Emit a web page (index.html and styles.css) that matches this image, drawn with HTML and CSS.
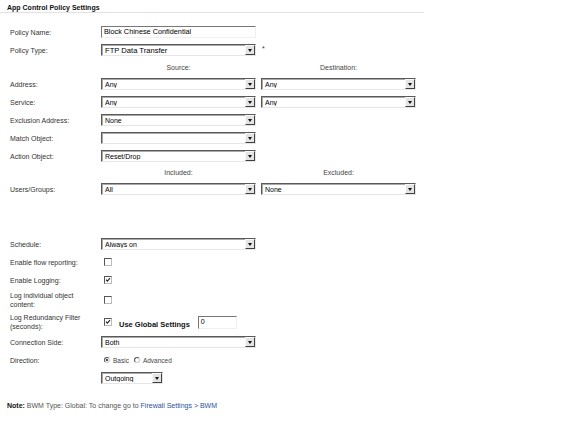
FILE: index.html
```html
<!DOCTYPE html>
<html>
<head>
<meta charset="utf-8">
<link rel="stylesheet" href="styles.css">
</head>
<body>
<div class="title">App Control Policy Settings</div>
<div class="form">
  <div class="row r-name">
    <div class="label">Policy Name:</div>
    <div class="textbox name">Block Chinese Confidential</div>
  </div>
  <div class="row">
    <div class="label">Policy Type:</div>
    <div class="select big"><span>FTP Data Transfer</span><i class="btn"></i></div>
    <span class="req">*</span>
  </div>
  <div class="row head h-src">
    <div class="label"></div>
    <div class="colhead">Source:</div>
    <div class="colhead">Destination:</div>
  </div>
  <div class="row">
    <div class="label">Address:</div>
    <div class="select"><span>Any</span><i class="btn"></i></div>
    <div class="select"><span>Any</span><i class="btn"></i></div>
  </div>
  <div class="row">
    <div class="label">Service:</div>
    <div class="select"><span>Any</span><i class="btn"></i></div>
    <div class="select"><span>Any</span><i class="btn"></i></div>
  </div>
  <div class="row">
    <div class="label">Exclusion Address:</div>
    <div class="select"><span>None</span><i class="btn"></i></div>
  </div>
  <div class="row">
    <div class="label">Match Object:</div>
    <div class="select"><span></span><i class="btn"></i></div>
  </div>
  <div class="row">
    <div class="label">Action Object:</div>
    <div class="select"><span>Reset/Drop</span><i class="btn"></i></div>
  </div>
  <div class="row head h-inc">
    <div class="label"></div>
    <div class="colhead">Included:</div>
    <div class="colhead">Excluded:</div>
  </div>
  <div class="row">
    <div class="label">Users/Groups:</div>
    <div class="select"><span>All</span><i class="btn"></i></div>
    <div class="select"><span>None</span><i class="btn"></i></div>
  </div>
  <div class="spacer"></div>
  <div class="row">
    <div class="label">Schedule:</div>
    <div class="select"><span>Always on</span><i class="btn"></i></div>
  </div>
  <div class="row">
    <div class="label">Enable flow reporting:</div>
    <span class="cb"></span>
  </div>
  <div class="row">
    <div class="label">Enable Logging:</div>
    <span class="cb checked"><svg viewBox="0 0 6 6" width="6" height="6"><path d="M1 2.6 L2.4 4.2 L5 1.2" fill="none" stroke="#222" stroke-width="1.1"/></svg></span>
  </div>
  <div class="row tall">
    <div class="label">Log individual object<br>content:</div>
    <span class="cb"></span>
  </div>
  <div class="row tall">
    <div class="label">Log Redundancy Filter<br>(seconds):</div>
    <span class="cb checked"><svg viewBox="0 0 6 6" width="6" height="6"><path d="M1 2.6 L2.4 4.2 L5 1.2" fill="none" stroke="#222" stroke-width="1.1"/></svg></span>
    <span class="global">Use Global Settings</span>
    <div class="textbox small">0</div>
  </div>
  <div class="row">
    <div class="label">Connection Side:</div>
    <div class="select"><span>Both</span><i class="btn"></i></div>
  </div>
  <div class="row">
    <div class="label">Direction:</div>
    <span class="radio on"></span><span class="rlabel">Basic</span>
    <span class="radio"></span><span class="rlabel">Advanced</span>
  </div>
  <div class="row">
    <div class="label"></div>
    <div class="select short"><span>Outgoing</span><i class="btn"></i></div>
  </div>
</div>
<p class="note"><b>Note:</b> BWM Type: Global: To change go to <a class="link">Firewall Settings &gt; BWM</a></p>
</body>
</html>
```
FILE: styles.css
```css
* { box-sizing: border-box; }
body {
  margin: 0;
  background: #fff;
  font-family: "Liberation Sans", Arial, sans-serif;
  font-size: 7px;
  color: #333;
}
.title {
  width: 424px;
  height: 13px;
  padding: 4px 0 0 7px;
  line-height: 8px;
  font-weight: bold;
  color: #111;
  border-bottom: 1px solid #e2e2e2;
}
.form {
  padding-top: 10px;
}
.row {
  display: flex;
  align-items: center;
  height: 18px;
}
.row.head { height: 16px; color: #444; }
.row.h-inc { height: 15px; }
.row.tall { height: 22px; }
.label {
  flex: none;
  width: 101px;
  padding-left: 10px;
  line-height: 9px;
}
.select {
  flex: none;
  width: 155px;
  height: 12px;
  display: flex;
  align-items: center;
  padding-left: 3px;
  background: #fff;
  color: #000;
  border: 1px solid;
  border-color: #5a5a5a #e6e6e6 #e6e6e6 #5a5a5a;
  box-shadow: inset 1px 1px 0 #a8a8a8;
}
.select + .select { margin-left: 5px; }
.select.big { font-size: 7.6px; }
.select.short { width: 62px; }
.select span { flex: 1; white-space: nowrap; overflow: hidden; }
.btn {
  flex: none;
  width: 10px;
  height: 10px;
  display: flex;
  align-items: center;
  justify-content: center;
  background: #e4e4e4;
  border: 1px solid;
  border-color: #f8f8f8 #404040 #404040 #f8f8f8;
}
.btn::after {
  content: "";
  width: 0;
  height: 0;
  border-left: 2.5px solid transparent;
  border-right: 2.5px solid transparent;
  border-top: 3px solid #111;
}
.req { margin-left: 6px; margin-top: -4px; color: #333; }
.colhead {
  flex: none;
  width: 155px;
  text-align: center;
}
.colhead + .colhead { margin-left: 5px; }
.textbox {
  flex: none;
  height: 12px;
  padding-left: 2px;
  line-height: 10px;
  color: #000;
  border-top: 1px solid #777;
  border-left: 1px solid #777;
  border-right: 1px solid #f0f0f0;
  border-bottom: 1px solid #f0f0f0;
}
.textbox.name { width: 155px; font-size: 7.3px; }
.textbox.small { width: 39px; height: 13px; margin-left: 8px; }
.cb {
  flex: none;
  width: 8px;
  height: 8px;
  margin-left: 3px;
  display: flex;
  align-items: center;
  justify-content: center;
  background: #fff;
  border: 1px solid;
  border-color: #555 #bbb #bbb #555;
}
.global {
  margin-left: 7px;
  margin-top: 5px;
  font-weight: bold;
  font-size: 7.5px;
  color: #111;
}
.radio {
  flex: none;
  width: 6px;
  height: 6px;
  margin-left: 3px;
  border-radius: 50%;
  border: 1px solid;
  border-color: #555 #ccc #ccc #555;
  display: flex;
  align-items: center;
  justify-content: center;
}
.radio.on::after {
  content: "";
  width: 2px;
  height: 2px;
  border-radius: 50%;
  background: #111;
}
.rlabel { margin-left: 3px; font-size: 6.5px; color: #444; }
.radio + .rlabel + .radio { margin-left: 5px; }
.spacer { height: 37px; }
.note {
  margin: 14px 0 0 7px;
  line-height: 10px;
  color: #555;
}
.note b { color: #111; }
.link { color: #2d4f9b; }
```
